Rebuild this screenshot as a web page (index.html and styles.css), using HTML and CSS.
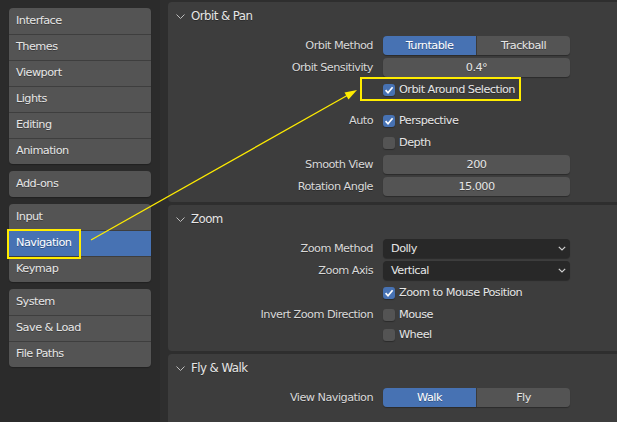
FILE: index.html
```html
<!DOCTYPE html>
<html>
<head>
<meta charset="utf-8">
<link rel="stylesheet" href="styles.css">
</head>
<body>
<div class="app">
  <nav class="sidebar">
    <div class="group">
      <div class="item">Interface</div>
      <div class="item">Themes</div>
      <div class="item">Viewport</div>
      <div class="item">Lights</div>
      <div class="item">Editing</div>
      <div class="item">Animation</div>
    </div>
    <div class="group">
      <div class="item">Add-ons</div>
    </div>
    <div class="group">
      <div class="item">Input</div>
      <div class="item active">Navigation</div>
      <div class="item">Keymap</div>
    </div>
    <div class="group">
      <div class="item">System</div>
      <div class="item">Save &amp; Load</div>
      <div class="item">File Paths</div>
    </div>
  </nav>

  <main class="main">
    <section class="panel first">
      <div class="panel-head"><svg class="chev" width="9" height="5" viewBox="0 0 9 5"><path d="M0.5 0.5 L4.5 4.5 L8.5 0.5" fill="none" stroke="#bdbdbd" stroke-width="1"/></svg>Orbit &amp; Pan</div>
      <div class="panel-body">
        <div class="row"><div class="label">Orbit Method</div><div class="seg"><div class="btn on">Turntable</div><div class="btn">Trackball</div></div></div>
        <div class="row"><div class="label">Orbit Sensitivity</div><div class="num">0.4°</div></div>
        <div class="row"><div class="label"></div><div class="check"><span class="box on"><svg width="12" height="12" viewBox="0 0 12 12"><path d="M2.6 6.2 L5 8.8 L9.6 3.2" fill="none" stroke="#fff" stroke-width="1.7"/></svg></span>Orbit Around Selection</div></div>
        <div class="row sep"><div class="label">Auto</div><div class="check"><span class="box on"><svg width="12" height="12" viewBox="0 0 12 12"><path d="M2.6 6.2 L5 8.8 L9.6 3.2" fill="none" stroke="#fff" stroke-width="1.7"/></svg></span>Perspective</div></div>
        <div class="row"><div class="label"></div><div class="check"><span class="box"></span>Depth</div></div>
        <div class="row"><div class="label">Smooth View</div><div class="num">200</div></div>
        <div class="row"><div class="label">Rotation Angle</div><div class="num">15.000</div></div>
      </div>
    </section>

    <section class="panel">
      <div class="panel-head"><svg class="chev" width="9" height="5" viewBox="0 0 9 5"><path d="M0.5 0.5 L4.5 4.5 L8.5 0.5" fill="none" stroke="#bdbdbd" stroke-width="1"/></svg>Zoom</div>
      <div class="panel-body">
        <div class="row"><div class="label">Zoom Method</div><div class="menu">Dolly<svg class="mchev" width="8" height="5" viewBox="0 0 8 5"><path d="M0.8 0.8 L4 4 L7.2 0.8" fill="none" stroke="#cfcfcf" stroke-width="1.2"/></svg></div></div>
        <div class="row"><div class="label">Zoom Axis</div><div class="menu">Vertical<svg class="mchev" width="8" height="5" viewBox="0 0 8 5"><path d="M0.8 0.8 L4 4 L7.2 0.8" fill="none" stroke="#cfcfcf" stroke-width="1.2"/></svg></div></div>
        <div class="row"><div class="label"></div><div class="check"><span class="box on"><svg width="12" height="12" viewBox="0 0 12 12"><path d="M2.6 6.2 L5 8.8 L9.6 3.2" fill="none" stroke="#fff" stroke-width="1.7"/></svg></span>Zoom to Mouse Position</div></div>
        <div class="row"><div class="label">Invert Zoom Direction</div><div class="check"><span class="box"></span>Mouse</div></div>
        <div class="row tight"><div class="label"></div><div class="check"><span class="box"></span>Wheel</div></div>
      </div>
    </section>

    <section class="panel last">
      <div class="panel-head"><svg class="chev" width="9" height="5" viewBox="0 0 9 5"><path d="M0.5 0.5 L4.5 4.5 L8.5 0.5" fill="none" stroke="#bdbdbd" stroke-width="1"/></svg>Fly &amp; Walk</div>
      <div class="panel-body">
        <div class="row"><div class="label">View Navigation</div><div class="seg"><div class="btn on">Walk</div><div class="btn">Fly</div></div></div>
      </div>
    </section>
  </main>
</div>

<svg class="annot" width="617" height="422" viewBox="0 0 617 422">
  <rect x="8" y="230" width="72" height="28" fill="none" stroke="#ffec00" stroke-width="2"/>
  <rect x="361" y="78" width="159" height="22" fill="none" stroke="#ffec00" stroke-width="2"/>
  <line x1="91" y1="240" x2="348" y2="95" stroke="#ffec00" stroke-width="1.3"/>
  <polygon points="357,90 344.5,92.4 348.5,99.4" fill="#ffec00"/>
</svg>
</body>
</html>
```

FILE: styles.css
```css
* { box-sizing: border-box; }
html, body {
  margin: 0;
  padding: 0;
  width: 617px;
  height: 422px;
  overflow: hidden;
  background: #2b2b2b;
}
body {
  font-family: "DejaVu Sans", sans-serif;
  font-size: 11.3px;
  letter-spacing: -0.55px;
  color: #e6e6e6;
  position: relative;
}
.app {
  display: flex;
  height: 422px;
}
.sidebar {
  width: 160px;
  flex: none;
  padding: 8px 9px;
  display: flex;
  flex-direction: column;
  gap: 7px;
  background: #2b2b2b;
}
.group {
  width: 142px;
  background: #545454;
  border-radius: 4px;
  overflow: hidden;
  box-shadow: 0 1px 1px rgba(0,0,0,0.25);
}
.item {
  height: 26px;
  line-height: 25px;
  padding-left: 7px;
  text-shadow: 0 1px 0 rgba(0,0,0,0.3);
}
.item + .item {
  border-top: 1px solid #3e3e3e;
  line-height: 24px;
}
.item.active {
  background: #4772b3;
  color: #ffffff;
}
.main {
  flex: 1;
  background: #2e2e2e;
  padding: 2px 0 0 8px;
  display: flex;
  flex-direction: column;
  gap: 3px;
}
.panel {
  background: #3d3d3d;
  border-radius: 4px 0 0 4px;
  padding-bottom: 8px;
}
.panel.first { padding-bottom: 7px; }
.panel.last {
  flex: 1;
  border-radius: 4px 0 0 0;
}
.panel-head {
  height: 26px;
  display: flex;
  align-items: center;
  padding-left: 8px;
  padding-top: 1px;
  font-size: 11.8px;
  color: #e6e6e6;
  text-shadow: 0 1px 0 rgba(0,0,0,0.3);
}
.chev {
  margin-right: 6px;
  margin-top: 1px;
}
.panel-body {
  padding-top: 4px;
}
.row {
  display: grid;
  grid-template-columns: 205px 187px;
  column-gap: 10px;
  height: 18px;
  margin-top: 4px;
}
.row.sep { margin-top: 13px; }
.row.tight { margin-top: 2px; }
.label {
  text-align: right;
  line-height: 19px;
  color: #d9d9d9;
  text-shadow: 0 1px 0 rgba(0,0,0,0.3);
  white-space: nowrap;
}
.seg {
  display: flex;
  border-radius: 4px;
  overflow: hidden;
  box-shadow: 0 1px 1px rgba(0,0,0,0.3);
}
.btn {
  flex: 1;
  background: #545454;
  text-align: center;
  line-height: 19px;
  text-shadow: 0 1px 0 rgba(0,0,0,0.3);
}
.btn + .btn { border-left: 1px solid #3a3a3a; }
.btn.on { background: #4772b3; color: #fff; }
.num {
  background: #545454;
  border-radius: 4px;
  text-align: center;
  line-height: 19px;
  box-shadow: 0 1px 1px rgba(0,0,0,0.3);
  text-shadow: 0 1px 0 rgba(0,0,0,0.3);
}
.menu {
  background: #282828;
  border-radius: 4px;
  line-height: 19px;
  padding-left: 8px;
  display: flex;
  justify-content: space-between;
  align-items: center;
  padding-right: 4px;
  box-shadow: 0 1px 1px rgba(0,0,0,0.3);
}
.check {
  display: flex;
  align-items: center;
  line-height: 19px;
  text-shadow: 0 1px 0 rgba(0,0,0,0.3);
}
.box {
  width: 12px;
  height: 12px;
  border-radius: 3px;
  background: #545454;
  margin-right: 4px;
  display: flex;
  box-shadow: 0 1px 1px rgba(0,0,0,0.3);
}
.box.on { background: #4772b3; }
.annot {
  position: absolute;
  left: 0;
  top: 0;
  pointer-events: none;
}
```
